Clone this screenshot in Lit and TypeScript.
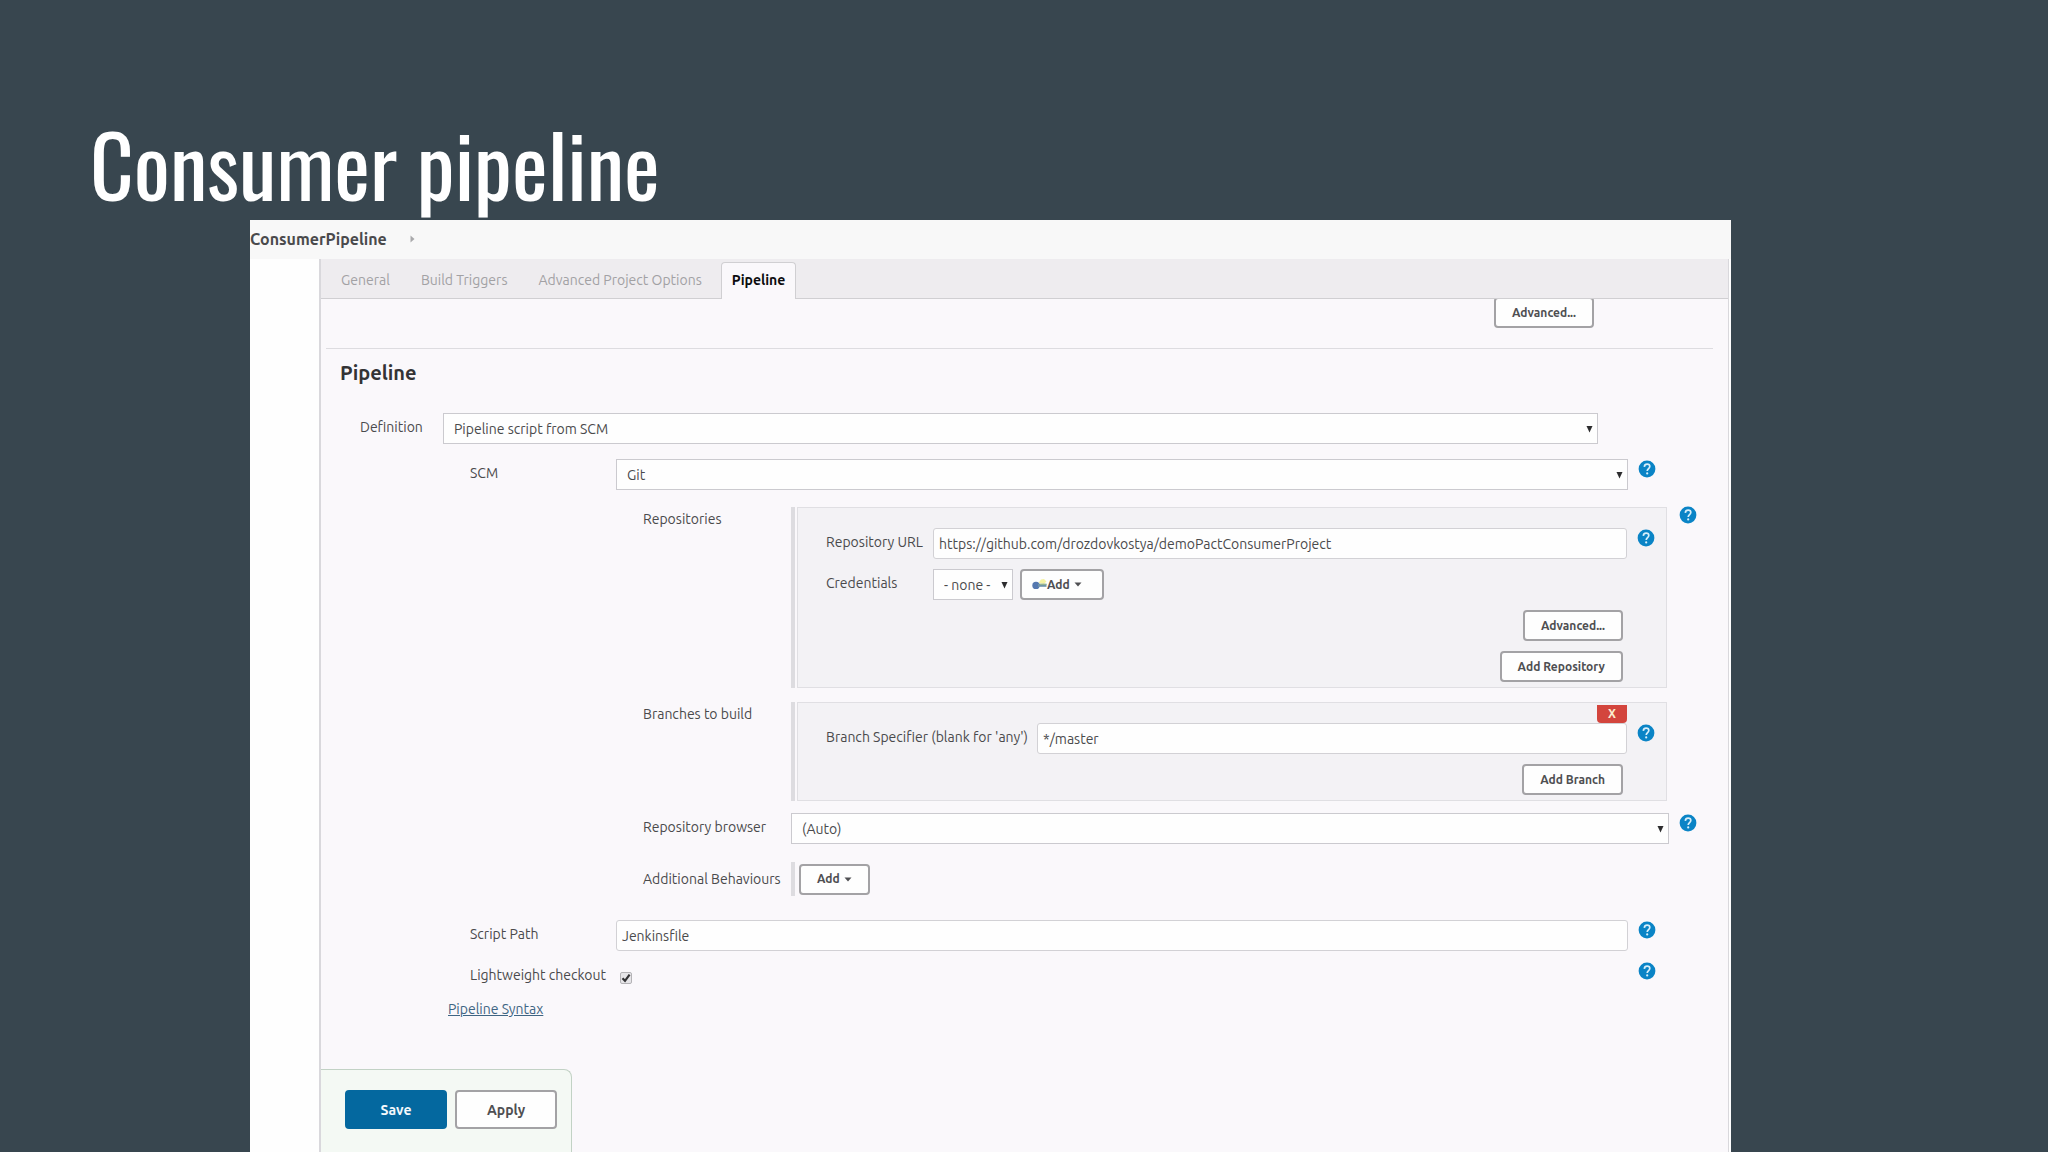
import { LitElement, html, css, svg, nothing } from "lit";
import { customElement, property } from "lit/decorators.js";

const controls = css`
  * {
    box-sizing: border-box;
  }
  button,
  input,
  select {
    margin: 0;
    font-family: inherit;
    color: inherit;
  }
`;

@customElement("help-button")
class HelpButton extends LitElement {
  @property() topic = "";

  static styles = [
    controls,
    css`
      :host {
        display: block;
        width: 18px;
        height: 20px;
      }
      .help {
        display: block;
        width: 18px;
        height: 20px;
        padding: 0;
        border: 0;
        background: none;
        cursor: pointer;
      }
      .glyph {
        display: block;
      }
    `,
  ];

  render() {
    return html`<button class="help" type="button" aria-label="Help for ${this.topic}">
      <svg class="glyph" width="18" height="20" viewBox="0 0 18 20" aria-hidden="true">
        <circle cx="9" cy="10" r="8.4" fill="#0a84c6" />
        <path d="M6.3 7.9C6.5 5.9 7.6 5.2 9.1 5.2c1.6 0 2.7.9 2.7 2.3 0 1.9-2.6 2.3-2.6 4.5" fill="none" stroke="#d8effa" stroke-width="1.7" />
        <circle cx="9.2" cy="14.4" r="1.1" fill="#d8effa" />
      </svg>
    </button>`;
  }
}

@customElement("app-root")
class AppRoot extends LitElement {
  static styles = [
    controls,
    css`
      :host {
        display: block;
        font-family: Ubuntu, "Open Sans", "Noto Sans", sans-serif;
        font-size: 14px;
        line-height: 20px;
        color: #4a4a4c;
      }
      .slide {
        display: flex;
        flex-direction: column;
        min-height: 100vh;
        padding: 108px 317px 0 250px;
        background: #38464f;
      }
      .slide-title {
        margin: 0 0 2px -160px;
        font-family: Oswald, "Liberation Sans Narrow", sans-serif;
        font-size: 85px;
        line-height: 110px;
        font-weight: 400;
        color: #fff;
        white-space: nowrap;
      }
      .window {
        flex: 1;
        display: flex;
        flex-direction: column;
        background: #fefefe;
      }
      .crumbs {
        display: flex;
        align-items: center;
        gap: 23px;
        height: 39px;
        padding-bottom: 2px;
        background: #f8f8f8;
        font-size: 16px;
        font-weight: 700;
      }
      .config {
        flex: 1;
        display: flex;
        flex-direction: column;
        margin: 0 2px 0 69px;
        border: solid #d9d8dc;
        border-width: 0 1px 0 2px;
        background: #faf8fb;
      }
      .tabs {
        display: flex;
        align-items: flex-end;
        height: 40px;
        padding-left: 4px;
        border-bottom: 1px solid #d0cfd2;
        background: #eeecef;
      }
      .tab {
        height: 36px;
        padding: 0 15px 0 16px;
        border: 0;
        background: none;
        font-size: 14px;
        color: #a2a1a4;
        white-space: nowrap;
      }
      .tab.active {
        height: 37px;
        margin: 0 0 -1px 4px;
        padding: 0 10px 2px;
        border: 1px solid #d0cfd2;
        border-bottom: 0;
        border-radius: 4px 4px 0 0;
        background: #faf8fb;
        font-weight: 700;
        color: #0c0c0e;
      }
      .scroller {
        flex: 1;
        display: flex;
        flex-direction: column;
        overflow: hidden;
      }
      .form {
        display: flex;
        flex-direction: column;
        flex: 1;
        margin-top: -2px;
      }
      .btn {
        height: 31px;
        padding: 0 16px;
        border: 2px solid #a3a2a5;
        border-radius: 4px;
        background: #fefefe;
        font-size: 12px;
        line-height: 16px;
        font-weight: 700;
        color: #4f4f52;
        white-space: nowrap;
      }
      .btn.menu {
        display: flex;
        align-items: center;
        gap: 4px;
      }
      .btn.menu.keyed {
        padding: 0 20px 0 10px;
      }
      .key-label {
        display: flex;
        align-items: center;
      }
      .above {
        align-self: flex-end;
        margin-right: 134px;
      }
      .section {
        margin: 20px 15px 0 5px;
        padding: 10px 0 0 14px;
        border-top: 1px solid #dddce0;
      }
      .section-title {
        margin: 0;
        font-size: 20px;
        line-height: 28px;
        font-weight: 700;
        color: #333335;
      }
      .row {
        display: grid;
        align-items: start;
      }
      .label {
        line-height: 28px;
        white-space: nowrap;
      }
      .definition {
        grid-template-columns: 83px 1fr;
        margin: 26px 130px 0 39px;
      }
      .nested {
        grid-template-columns: 146px 1fr 18px;
        margin: 0 72px 0 149px;
      }
      .row > help-button {
        justify-self: end;
      }
      .nested .control,
      .inner .control {
        margin-right: 10px;
      }
      .scm {
        margin-top: 15px;
      }
      .deep {
        grid-template-columns: 148px 1fr 28px;
        margin: 0 31px 0 322px;
      }
      .repos {
        margin-top: 15px;
      }
      .branches {
        margin-top: 12px;
      }
      .browser {
        margin-top: 12px;
      }
      .behaviours {
        align-items: center;
        margin-top: 18px;
      }
      .script {
        margin-top: 24px;
      }
      .light {
        margin-top: 10px;
      }
      .chunk {
        margin: 2px 2px 0 0;
        padding-left: 2px;
        border-left: 4px solid #dddce0;
      }
      .chunk.bare {
        display: flex;
        align-items: center;
        height: 34px;
        margin-top: 0;
        padding-left: 4px;
      }
      .box {
        display: flex;
        flex-direction: column;
        gap: 10px;
        padding: 20px 11px 5px 28px;
        border: 1px solid #e0dfe3;
        background: #f3f2f5;
      }
      .box.removable {
        padding-top: 2px;
      }
      .removable-item {
        display: flex;
        flex-direction: column;
      }
      .inner {
        grid-template-columns: 107px 1fr 18px;
      }
      .inner.branch {
        grid-template-columns: 211px 1fr 18px;
      }
      .pair {
        display: flex;
        gap: 7px;
      }
      .end {
        align-self: flex-end;
        margin-right: 32px;
      }
      .delete {
        align-self: flex-end;
        width: 30px;
        height: 18px;
        margin-right: 28px;
        padding: 0;
        border: 0;
        border-radius: 0 0 4px 4px;
        background: #d3453d;
        font-size: 12px;
        line-height: 16px;
        font-weight: 700;
        color: #fbeecf;
      }
      .text {
        display: block;
        width: 100%;
        height: 31px;
        padding: 0 5px;
        border: 1px solid #d2d1d5;
        border-radius: 3px;
        background: #fefefe;
        font-size: 14px;
      }
      .picker {
        display: grid;
        align-items: center;
      }
      .select,
      .arrow {
        grid-area: 1 / 1;
      }
      .select {
        appearance: none;
        width: 100%;
        height: 31px;
        padding: 0 21px 0 10px;
        border: 1px solid #cbcacf;
        border-radius: 0;
        background: #fefefe;
        font-size: 14px;
      }
      .arrow {
        justify-self: end;
        margin-right: 5px;
        pointer-events: none;
      }
      .tick {
        display: grid;
        place-items: center start;
        height: 34px;
        padding-left: 4px;
      }
      .box-input,
      .mark {
        grid-area: 1 / 1;
      }
      .box-input {
        appearance: none;
        width: 12px;
        height: 12px;
        border: 1px solid #b4b3b6;
        border-radius: 2px;
        background: #e6e5e8;
      }
      .mark {
        pointer-events: none;
        visibility: hidden;
      }
      .box-input:checked + .mark {
        visibility: visible;
      }
      .syntax {
        align-self: flex-start;
        margin: 4px 0 50px 127px;
        color: #3f6583;
      }
      .actions {
        flex: 1;
        display: flex;
        align-items: flex-start;
        align-self: flex-start;
        gap: 8px;
        margin-left: -1px;
        padding: 20px 14px 20px 24px;
        border: solid #c2d2c5;
        border-width: 1px 1px 0 1px;
        border-radius: 0 8px 0 0;
        background: #f4f9f4;
      }
      .big {
        width: 102px;
        height: 39px;
        border: 2px solid #a3a2a5;
        border-radius: 4px;
        background: #fefefe;
        font-size: 14px;
        font-weight: 700;
        color: #4f4f52;
      }
      .big.primary {
        border-color: #04689f;
        background: #04689f;
        color: #f4f9fc;
      }
    `,
  ];

  private picker(id: string, value: string) {
    return html`<span class="picker">
      <select class="select" id=${id} aria-label=${id === "credentials" ? "Credentials" : nothing}>
        <option>${value}</option>
      </select>
      <svg class="arrow" width="7" height="8" viewBox="0 0 7 8" aria-hidden="true">
        <path d="M0.5 1h6L3.5 7.4z" fill="#2c2c2e" />
      </svg>
    </span>`;
  }

  private caret() {
    return html`<svg width="8" height="5" viewBox="0 0 8 5" aria-hidden="true">
      ${svg`<path d="M0.5 0.5h7L4 4.5z" fill="#4f4f52" />`}
    </svg>`;
  }

  render() {
    return html`
      <main class="slide">
        <h1 class="slide-title">Consumer pipeline</h1>
        <section class="window">
          <nav class="crumbs">
            <span>ConsumerPipeline</span>
            <svg width="5" height="8" viewBox="0 0 5 8" aria-hidden="true">
              <path d="M0.5 0.5L4.5 4L0.5 7.5z" fill="#a9a9ab" />
            </svg>
          </nav>
          <div class="config">
            <div class="tabs" role="tablist">
              <button class="tab" role="tab" type="button">General</button>
              <button class="tab" role="tab" type="button">Build Triggers</button>
              <button class="tab" role="tab" type="button">Advanced Project Options</button>
              <button class="tab active" role="tab" type="button" aria-selected="true">Pipeline</button>
            </div>
            <div class="scroller">
              <form class="form">
                <button class="btn above" type="button">Advanced...</button>
                <div class="section"><h2 class="section-title">Pipeline</h2></div>

                <div class="row definition">
                  <label class="label" for="definition">Definition</label>
                  ${this.picker("definition", "Pipeline script from SCM")}
                </div>

                <div class="row nested scm">
                  <label class="label" for="scm">SCM</label>
                  <div class="control">${this.picker("scm", "Git")}</div>
                  <help-button topic="SCM"></help-button>
                </div>

                <div class="row deep repos">
                  <span class="label">Repositories</span>
                  <div class="chunk">
                    <div class="box">
                      <div class="row inner">
                        <label class="label" for="url">Repository URL</label>
                        <div class="control">
                          <input class="text" id="url" type="text" value="https://github.com/drozdovkostya/demoPactConsumerProject" />
                        </div>
                        <help-button topic="Repository URL"></help-button>
                      </div>
                      <div class="row inner">
                        <label class="label" for="credentials">Credentials</label>
                        <div class="pair">
                          ${this.picker("credentials", "- none -")}
                          <button class="btn menu keyed" type="button">
                            <span class="key-label">
                              <svg width="15" height="14" viewBox="0 0 15 14" aria-hidden="true">
                                <path d="M6.5 5L9 1.5l3-.5 2.5 2.5L12 6z" fill="#f5f2a2" />
                                <circle cx="4" cy="7.4" r="3.7" fill="#5578b0" />
                                <path d="M6 5.8h8.5v3H6z" fill="#6f93a8" />
                                <path d="M8 5.8h6.5v1H8z" fill="#9dbb8a" />
                              </svg>
                              Add
                            </span>
                            ${this.caret()}
                          </button>
                        </div>
                      </div>
                      <button class="btn end" type="button">Advanced...</button>
                      <button class="btn end" type="button">Add Repository</button>
                    </div>
                  </div>
                  <help-button topic="Repositories"></help-button>
                </div>

                <div class="row deep branches">
                  <span class="label">Branches to build</span>
                  <div class="chunk">
                    <div class="box removable">
                      <div class="removable-item">
                        <button class="delete" type="button">X</button>
                        <div class="row inner branch">
                          <label class="label" for="branch">Branch Specifier (blank for 'any')</label>
                          <div class="control">
                            <input class="text" id="branch" type="text" value="*/master" />
                          </div>
                          <help-button topic="Branch Specifier"></help-button>
                        </div>
                      </div>
                      <button class="btn end" type="button">Add Branch</button>
                    </div>
                  </div>
                </div>

                <div class="row deep browser">
                  <label class="label" for="browser">Repository browser</label>
                  ${this.picker("browser", "(Auto)")}
                  <help-button topic="Repository browser"></help-button>
                </div>

                <div class="row deep behaviours">
                  <span class="label">Additional Behaviours</span>
                  <div class="chunk bare">
                    <button class="btn menu" type="button">Add ${this.caret()}</button>
                  </div>
                </div>

                <div class="row nested script">
                  <label class="label" for="path">Script Path</label>
                  <div class="control"><input class="text" id="path" type="text" value="Jenkinsfile" /></div>
                  <help-button topic="Script Path"></help-button>
                </div>

                <div class="row nested light">
                  <label class="label" for="lightweight">Lightweight checkout</label>
                  <div class="tick">
                    <input class="box-input" id="lightweight" type="checkbox" checked />
                    <svg class="mark" width="12" height="12" viewBox="0 0 12 12" aria-hidden="true">
                      <path d="M2.5 6.2L5 8.8L9.6 2.6" fill="none" stroke="#333335" stroke-width="2.2" />
                    </svg>
                  </div>
                  <help-button topic="Lightweight checkout"></help-button>
                </div>

                <a class="syntax" href="#syntax">Pipeline Syntax</a>

                <div class="actions">
                  <button class="big primary" type="submit">Save</button>
                  <button class="big" type="button">Apply</button>
                </div>
              </form>
            </div>
          </div>
        </section>
      </main>
    `;
  }
}
